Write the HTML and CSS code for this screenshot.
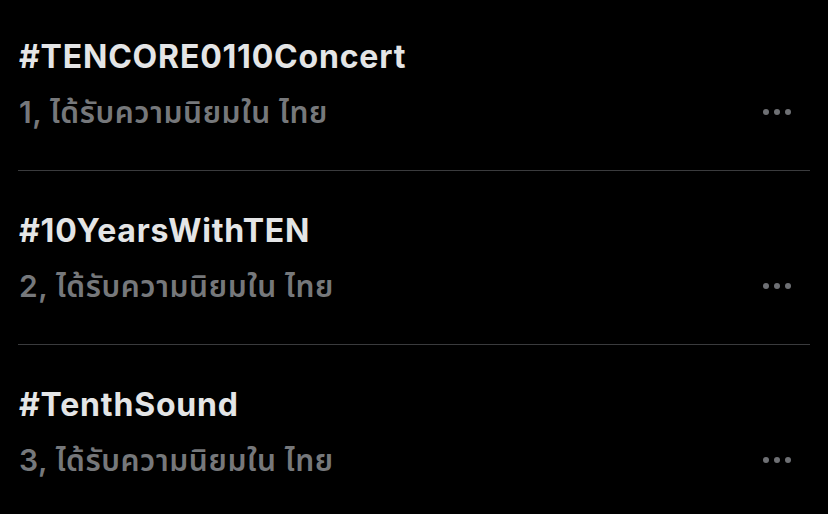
FILE: index.html
```html
<!DOCTYPE html>
<html lang="th">
<head>
  <meta charset="UTF-8" />
  <meta name="viewport" content="width=device-width, initial-scale=1.0"/>
  <title>กำลังเป็นกระแส</title>
  <link rel="stylesheet" href="styles.css">
</head>
<body>
  <div class="trends">

    <div class="trend">
      <div class="trend-title">#TENCORE0110Concert</div>
      <div class="trend-meta">
        <span class="meta-text">1, ได้รับความนิยมใน ไทย</span>
        <span class="more"><i></i><i></i><i></i></span>
      </div>
    </div>

    <div class="trend">
      <div class="trend-title">#10YearsWithTEN</div>
      <div class="trend-meta">
        <span class="meta-text">2, ได้รับความนิยมใน ไทย</span>
        <span class="more"><i></i><i></i><i></i></span>
      </div>
    </div>

    <div class="trend">
      <div class="trend-title">#TenthSound</div>
      <div class="trend-meta">
        <span class="meta-text">3, ได้รับความนิยมใน ไทย</span>
        <span class="more"><i></i><i></i><i></i></span>
      </div>
    </div>

  </div>
</body>
</html>
```

FILE: styles.css
```css
body {
  margin: 0;
  background: #000;
  font-family: Inter, "Noto Sans", "Noto Sans Thai", sans-serif;
  color: #e4e5e6;
}

.trends {
  padding: 0 18px;
}

.trend {
  padding: 41px 0 39px 1px;
  border-bottom: 1px solid #3a3b3d;
}

.trend:first-child {
  padding-top: 38px;
}

.trend:last-child {
  border-bottom: none;
}

.trend-title {
  font-size: 32px;
  font-weight: 700;
  letter-spacing: 0.8px;
  line-height: 38px;
  height: 38px;
}

.trend-meta {
  display: flex;
  align-items: center;
  justify-content: space-between;
  margin-top: 17px;
  height: 38px;
}

.meta-text {
  font-size: 30px;
  font-weight: 600;
  letter-spacing: 0.6px;
  line-height: 38px;
  color: #76787b;
}

.more {
  display: flex;
  gap: 5px;
  margin-right: 19px;
}

.more i {
  width: 6px;
  height: 6px;
  border-radius: 50%;
  background: #6e7074;
}
```
